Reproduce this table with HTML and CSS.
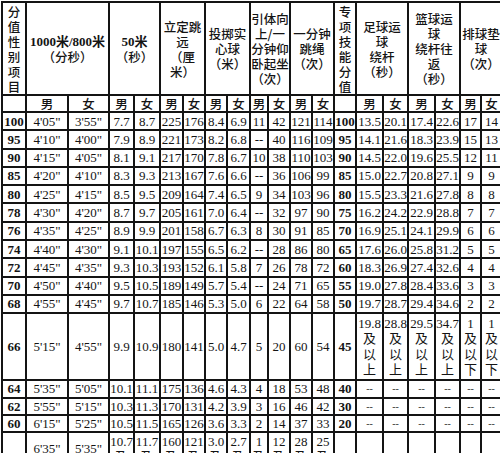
FILE: index.html
```html
<!DOCTYPE html>
<html lang="zh-CN">
<head>
<meta charset="utf-8">
<title>体育考试评分标准</title>
<link rel="stylesheet" href="styles.css">
</head>
<body>
<table class="score-table">
  <colgroup>
    <col class="c24"><col class="c42"><col class="c41"><col class="c25"><col class="c26"><col class="c23"><col class="c22"><col class="c22"><col class="c23"><col class="c18"><col class="c22"><col class="c22"><col class="c22"><col class="c22"><col class="c27"><col class="c25"><col class="c27"><col class="c25"><col class="c21"><col class="c21">
  </colgroup>
  <thead>
    <tr class="head">
      <th>分<br>值<br>性<br>别<br>项<br>目</th>
      <th colspan="2"><span class="bold">1000米/800米</span><br>（分秒）</th>
      <th colspan="2"><span class="bold">50米</span><br>（秒）</th>
      <th colspan="2">立定跳<br>远<br>（厘<br>米）</th>
      <th colspan="2">投掷实<br>心球<br>（米）</th>
      <th colspan="2">引体向<br>上/一<br>分钟仰<br>卧起坐<br>（次）</th>
      <th colspan="2">一分钟<br>跳绳<br>（次）</th>
      <th>专<br>项<br>技<br>能<br>分<br>值</th>
      <th colspan="2">足球运<br>球<br>绕杆<br>（秒）</th>
      <th colspan="2">篮球运<br>球<br>绕杆往<br>返<br>（秒）</th>
      <th colspan="2">排球垫<br>球<br>（次）</th>
    </tr>
    <tr class="sex">
      <td></td><td>男</td><td>女</td><td>男</td><td>女</td><td>男</td><td>女</td><td>男</td><td>女</td><td>男</td><td>女</td><td>男</td><td>女</td><td></td><td>男</td><td>女</td><td>男</td><td>女</td><td>男</td><td>女</td>
    </tr>
  </thead>
  <tbody>
    <tr class="row"><td class="score">100</td><td>4'05"</td><td>3'55"</td><td>7.7</td><td>8.7</td><td>225</td><td>176</td><td>8.4</td><td>6.9</td><td>11</td><td>42</td><td>121</td><td>114</td><td class="score">100</td><td>13.5</td><td>20.1</td><td>17.4</td><td>22.6</td><td>17</td><td>14</td></tr>
    <tr class="row"><td class="score">95</td><td>4'10"</td><td>4'00"</td><td>7.9</td><td>8.9</td><td>221</td><td>173</td><td>8.2</td><td>6.8</td><td>--</td><td>40</td><td>116</td><td>109</td><td class="score">95</td><td>14.1</td><td>21.6</td><td>18.3</td><td>23.9</td><td>15</td><td>13</td></tr>
    <tr class="row"><td class="score">90</td><td>4'15"</td><td>4'05"</td><td>8.1</td><td>9.1</td><td>217</td><td>170</td><td>7.8</td><td>6.7</td><td>10</td><td>38</td><td>110</td><td>103</td><td class="score">90</td><td>14.5</td><td>22.0</td><td>19.6</td><td>25.5</td><td>12</td><td>11</td></tr>
    <tr class="row"><td class="score">85</td><td>4'20"</td><td>4'10"</td><td>8.3</td><td>9.3</td><td>213</td><td>167</td><td>7.6</td><td>6.6</td><td>--</td><td>36</td><td>106</td><td>99</td><td class="score">85</td><td>15.0</td><td>22.7</td><td>20.8</td><td>27.1</td><td>9</td><td>9</td></tr>
    <tr class="row"><td class="score">80</td><td>4'25"</td><td>4'15"</td><td>8.5</td><td>9.5</td><td>209</td><td>164</td><td>7.4</td><td>6.5</td><td>9</td><td>34</td><td>103</td><td>96</td><td class="score">80</td><td>15.5</td><td>23.3</td><td>21.6</td><td>27.8</td><td>8</td><td>8</td></tr>
    <tr class="row"><td class="score">78</td><td>4'30"</td><td>4'20"</td><td>8.7</td><td>9.7</td><td>205</td><td>161</td><td>7.0</td><td>6.4</td><td>--</td><td>32</td><td>97</td><td>90</td><td class="score">75</td><td>16.2</td><td>24.2</td><td>22.9</td><td>28.8</td><td>7</td><td>7</td></tr>
    <tr class="row"><td class="score">76</td><td>4'35"</td><td>4'25"</td><td>8.9</td><td>9.9</td><td>201</td><td>158</td><td>6.7</td><td>6.3</td><td>8</td><td>30</td><td>91</td><td>85</td><td class="score">70</td><td>16.9</td><td>25.1</td><td>24.1</td><td>29.9</td><td>6</td><td>6</td></tr>
    <tr class="row"><td class="score">74</td><td>4'40"</td><td>4'30"</td><td>9.1</td><td>10.1</td><td>197</td><td>155</td><td>6.5</td><td>6.2</td><td>--</td><td>28</td><td>86</td><td>80</td><td class="score">65</td><td>17.6</td><td>26.0</td><td>25.8</td><td>31.2</td><td>5</td><td>5</td></tr>
    <tr class="row"><td class="score">72</td><td>4'45"</td><td>4'35"</td><td>9.3</td><td>10.3</td><td>193</td><td>152</td><td>6.1</td><td>5.8</td><td>7</td><td>26</td><td>78</td><td>72</td><td class="score">60</td><td>18.3</td><td>26.9</td><td>27.4</td><td>32.6</td><td>4</td><td>4</td></tr>
    <tr class="row"><td class="score">70</td><td>4'50"</td><td>4'40"</td><td>9.5</td><td>10.5</td><td>189</td><td>149</td><td>5.7</td><td>5.4</td><td>--</td><td>24</td><td>71</td><td>65</td><td class="score">55</td><td>19.0</td><td>27.8</td><td>28.4</td><td>33.6</td><td>3</td><td>3</td></tr>
    <tr class="row"><td class="score">68</td><td>4'55"</td><td>4'45"</td><td>9.7</td><td>10.7</td><td>185</td><td>146</td><td>5.3</td><td>5.0</td><td>6</td><td>22</td><td>64</td><td>58</td><td class="score">50</td><td>19.7</td><td>28.7</td><td>29.4</td><td>34.6</td><td>2</td><td>2</td></tr>
    <tr class="row tall"><td class="score">66</td><td>5'15"</td><td>4'55"</td><td>9.9</td><td>10.9</td><td>180</td><td>141</td><td>5.0</td><td>4.7</td><td>5</td><td>20</td><td>60</td><td>54</td><td class="score">45</td><td>19.8<br>及<br>以<br>上</td><td>28.8<br>及<br>以<br>上</td><td>29.5<br>及<br>以<br>上</td><td>34.7<br>及<br>以<br>上</td><td>1<br>及<br>以<br>下</td><td>1<br>及<br>以<br>下</td></tr>
    <tr class="row short"><td class="score">64</td><td>5'35"</td><td>5'05"</td><td>10.1</td><td>11.1</td><td>175</td><td>136</td><td>4.6</td><td>4.3</td><td>4</td><td>18</td><td>53</td><td>48</td><td class="score">40</td><td class="dash">--</td><td class="dash">--</td><td class="dash">--</td><td class="dash">--</td><td class="dash">--</td><td class="dash">--</td></tr>
    <tr class="row short"><td class="score">62</td><td>5'55"</td><td>5'15"</td><td>10.3</td><td>11.3</td><td>170</td><td>131</td><td>4.2</td><td>3.9</td><td>3</td><td>16</td><td>46</td><td>42</td><td class="score">30</td><td class="dash">--</td><td class="dash">--</td><td class="dash">--</td><td class="dash">--</td><td class="dash">--</td><td class="dash">--</td></tr>
    <tr class="row short"><td class="score">60</td><td>6'15"</td><td>5'25"</td><td>10.5</td><td>11.5</td><td>165</td><td>126</td><td>3.6</td><td>3.3</td><td>2</td><td>14</td><td>37</td><td>33</td><td class="score">20</td><td class="dash">--</td><td class="dash">--</td><td class="dash">--</td><td class="dash">--</td><td class="dash">--</td><td class="dash">--</td></tr>
    <tr class="row last"><td class="score"></td><td>6'35"<br>及以<br>下</td><td>5'35"<br>及以<br>下</td><td>10.7<br>及<br>以<br>下</td><td>11.7<br>及<br>以<br>下</td><td>160<br>及<br>以<br>下</td><td>121<br>及<br>以<br>下</td><td>3.0<br>及<br>以<br>下</td><td>2.7<br>及<br>以<br>下</td><td>1<br>及<br>以<br>下</td><td>12<br>及<br>以<br>下</td><td>28<br>及<br>以<br>下</td><td>25<br>及<br>以<br>下</td><td class="score"></td><td></td><td></td><td></td><td></td><td></td><td></td></tr>
  </tbody>
</table>
</body>
</html>
```

FILE: styles.css
```css
html, body {
  margin: 0;
  padding: 0;
  background: #ffffff;
}

body {
  width: 500px;
  height: 453px;
  overflow: hidden;
}

.score-table {
  border-collapse: collapse;
  table-layout: fixed;
  width: 501px;
  margin: 1px 0 0 1px;
  font-family: "Liberation Serif", "Noto Sans CJK SC", serif;
  font-size: 13px;
  color: #141414;
}

.c18 { width: 18px; }
.c21 { width: 21px; }
.c22 { width: 22px; }
.c23 { width: 23px; }
.c24 { width: 24px; }
.c25 { width: 25px; }
.c26 { width: 26px; }
.c27 { width: 27px; }
.c41 { width: 41px; }
.c42 { width: 42px; }

.score-table th,
.score-table td {
  border: 2px solid #141414;
  padding: 0;
  text-align: center;
  vertical-align: middle;
  white-space: nowrap;
  overflow: hidden;
}

.head th {
  height: 91px;
  font-family: "Noto Sans CJK SC", sans-serif;
  font-size: 12.5px;
  line-height: 15px;
  font-weight: 500;
}

.head .bold {
  font-family: "Liberation Serif", "Noto Sans CJK SC", serif;
  font-weight: bold;
  font-size: 13px;
}

.sex td {
  height: 15px;
  font-family: "Noto Sans CJK SC", sans-serif;
  font-size: 12.5px;
  line-height: 15px;
  font-weight: 500;
}

.row td {
  height: 16.3px;
  line-height: 15.3px;
}

.row.tall td {
  height: 65px;
}

.row.short td {
  height: 15px;
}

.row.last td {
  height: 61px;
  line-height: 15px;
}

.score-table .score {
  font-weight: bold;
}

.score-table .dash {
  font-size: 10px;
  color: #333;
}
```
